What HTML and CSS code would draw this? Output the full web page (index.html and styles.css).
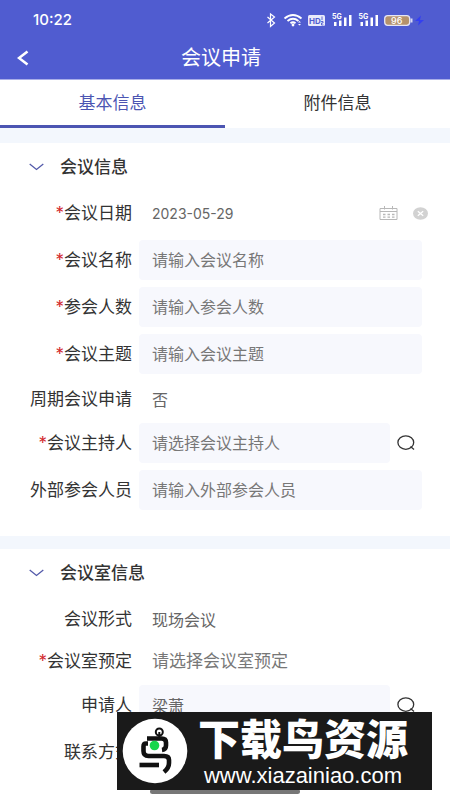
FILE: index.html
```html
<!DOCTYPE html>
<html lang="zh-CN">
<head>
<meta charset="utf-8">
<meta name="viewport" content="width=device-width, initial-scale=1">
<title>会议申请</title>
<link rel="stylesheet" href="styles.css">
</head>
<body>
<header class="top">
  <div class="status">
    <span class="clock">10:22</span>
    <svg class="status-icons" width="160" height="16" viewBox="0 0 160 16" aria-hidden="true">
      <path d="M1.500 5l7 6-4 3.500V2l4 3-7 6" fill="none" stroke="#fff" stroke-width="1.200"/>
      <g fill="none" stroke="#fff" stroke-width="1.800">
        <path d="M18.500 6.500q8.500-7 17 0M21.500 9q5.500-4.500 11 0M24.500 11.300q2.500-2 5 0"/>
      </g>
      <circle cx="27" cy="13" r="1.400" fill="#fff"/>
      <path d="M32 10.500l1.500-1.500 1.500 1.500zM32 12l1.500 1.500 1.500-1.500z" fill="#fff"/>
      <rect x="42" y="3" width="17" height="11" rx="1.500" fill="#e9eafa"/>
      <text x="43" y="11.500" class="hd">HD</text>
      <path d="M56 4.500v3.500M55 9.500h2v1.500h-1.500V13h2" fill="none" stroke="#505cd0" stroke-width=".9"/>
      <g fill="#fff">
        <text x="66" y="6.500" class="net">5G</text>
        <path d="M68 10h2.500v4H68zM73 8.500h2.500V14H73zM78 5.500h2.500V14H78zM83 3h2.500v11H83z"/>
        <text x="92.500" y="6.500" class="net">5G</text>
        <path d="M94.500 10H97v4h-2.500zM99.500 8.500h2.500V14h-2.500zM104.500 5.500h2.500V14h-2.500zM109.500 3h2.500v11h-2.500z"/>
      </g>
      <rect x="118.700" y="3.700" width="25" height="9.600" rx="3" fill="#b5926c" stroke="#e6e5f5" stroke-width="1.300"/>
      <path d="M145.500 6.500v4" stroke="#d9dbf5" stroke-width="2"/>
      <text x="125" y="12" class="batt">96</text>
      <path d="M155 3.500l-6 5.500h4l-1 4.500 6-5.500h-4z" fill="#343ff0"/>
    </svg>
  </div>
  <div class="nav">
    <button class="back" type="button" aria-label="返回">
      <svg width="12" height="16" viewBox="0 0 12 16"><path d="M10.500 1.500L2 8l8.500 6.500" fill="none" stroke="#fff" stroke-width="2.600"/></svg>
    </button>
    <h1 class="title">会议申请</h1>
  </div>
</header>

<nav class="tabs">
  <button class="tab tab-active" type="button">基本信息</button>
  <button class="tab" type="button">附件信息</button>
</nav>

<main class="main">
  <section class="card">
    <h2 class="card-head"><button class="toggle" type="button">
      <svg width="15" height="8" viewBox="0 0 15 8"><path d="M.7 1L7.500 6.500 14.300 1" fill="none" stroke="#535aaa" stroke-width="1.300"/></svg>
      会议信息</button></h2>
    <div class="fields">
      <div class="row row-date">
        <label class="label required" for="date">会议日期</label>
        <input class="field plain date" id="date" value="2023-05-29">
        <button class="icon-btn" type="button" aria-label="选择日期">
          <svg width="19" height="14" viewBox="0 0 19 14" fill="none" stroke="#b8b8b8"><path d="M1 2.500h17v11H1zM1 5.500h17M5.500 0v3.500M13.500 0v3.500"/><path d="M4 8.500h11.500M4 11.200h11.500" stroke-dasharray="2.500 2" stroke-width="1.300"/></svg>
        </button>
        <button class="icon-btn" type="button" aria-label="清除">
          <svg width="15" height="13" viewBox="0 0 15 13"><ellipse cx="7.500" cy="6.500" rx="7.500" ry="6.200" fill="#d2d2d2"/><path d="M4.800 4.200l5.400 4.600M10.200 4.200L4.800 8.800" stroke="#fff" stroke-width="1.300"/></svg>
        </button>
      </div>
      <div class="row">
        <label class="label required" for="name">会议名称</label>
        <input class="field" id="name" placeholder="请输入会议名称">
      </div>
      <div class="row">
        <label class="label required" for="count">参会人数</label>
        <input class="field" id="count" placeholder="请输入参会人数">
      </div>
      <div class="row">
        <label class="label required" for="topic">会议主题</label>
        <input class="field" id="topic" placeholder="请输入会议主题">
      </div>
      <div class="row row-short">
        <label class="label" for="cycle">周期会议申请</label>
        <input class="field plain" id="cycle" value="否" readonly>
      </div>
      <div class="row">
        <label class="label required" for="host">会议主持人</label>
        <input class="field" id="host" placeholder="请选择会议主持人">
        <button class="icon-btn" type="button" aria-label="搜索">
          <svg width="18" height="16" viewBox="0 0 18 16" fill="none" stroke="#333" stroke-width="1.300"><ellipse cx="8.800" cy="7.600" rx="7.900" ry="6.700"/><path d="M13.500 11.500l3.500 3"/></svg>
        </button>
      </div>
      <div class="row">
        <label class="label" for="guests">外部参会人员</label>
        <input class="field" id="guests" placeholder="请输入外部参会人员">
      </div>
    </div>
  </section>

  <section class="card">
    <h2 class="card-head"><button class="toggle" type="button">
      <svg width="15" height="8" viewBox="0 0 15 8"><path d="M.7 1L7.500 6.500 14.300 1" fill="none" stroke="#535aaa" stroke-width="1.300"/></svg>
      会议室信息</button></h2>
    <div class="fields fields-room">
      <div class="row row-short">
        <label class="label" for="form">会议形式</label>
        <input class="field plain" id="form" value="现场会议" readonly>
      </div>
      <div class="row row-short">
        <label class="label required" for="room">会议室预定</label>
        <input class="field plain large" id="room" placeholder="请选择会议室预定">
      </div>
      <div class="row">
        <label class="label" for="applicant">申请人</label>
        <input class="field" id="applicant" value="梁萧">
        <button class="icon-btn" type="button" aria-label="搜索">
          <svg width="18" height="16" viewBox="0 0 18 16" fill="none" stroke="#333" stroke-width="1.300"><ellipse cx="8.800" cy="7.600" rx="7.900" ry="6.700"/><path d="M13.500 11.500l3.500 3"/></svg>
        </button>
      </div>
      <div class="row">
        <label class="label" for="contact">联系方式</label>
        <input class="field plain" id="contact">
      </div>
    </div>
  </section>
</main>

<div class="home-bar"></div>
<aside class="mark">
  <svg class="mark-logo" width="66" height="66" viewBox="0 0 66 66" aria-hidden="true">
    <circle cx="33" cy="33" r="32.300" fill="#fff"/>
    <g fill="none" stroke="#111" stroke-width="4.600" stroke-linejoin="round">
      <circle cx="37.300" cy="14" r="3.500" stroke-width="2"/>
      <path d="M37.300 14v5" stroke-width="2"/>
      <path d="M25 20.500h14.500q4.500 0 4.500 4v3q0 4-4 4.500"/>
      <path d="M26 25.500h-2q-2.500 0-2.500 3v4.500q0 5 5 5h15.500q5 0 5 4v3q0 5-5 9"/>
      <path d="M17.500 47h19.500"/>
    </g>
    <circle cx="32.500" cy="27.500" r="4.800" fill="#18d64b"/>
  </svg>
  <div class="mark-text">
    <strong class="mark-name">下载鸟资源</strong>
    <span class="mark-url">www.xiazainiao.com</span>
  </div>
</aside>
</body>
</html>
```
FILE: styles.css
```css
* {
  box-sizing: border-box;
}

body {
  margin: 0;
  min-height: 100vh;
  background: #fff;
  color: #333;
  font-family: Inter, "Noto Sans CJK SC", sans-serif;
  font-size: 17px;
  line-height: 24px;
}

button,
input {
  margin: 0;
  padding: 0;
  border: 0;
  background: none;
  color: inherit;
  font: inherit;
}

svg {
  display: block;
}

.top {
  height: 80px;
  border-bottom: 1px solid #a9aee8;
  background: #505cd0;
  color: #fff;
}

.status {
  display: flex;
  align-items: center;
  justify-content: space-between;
  height: 40px;
  padding: 0 24px 0 33px;
}

.clock {
  font-size: 15px;
  font-weight: 500;
}

.hd {
  fill: #505cd0;
  font-size: 8px;
  font-weight: 700;
}

.net {
  font-size: 7px;
  font-weight: 700;
}

.batt {
  fill: #fff;
  font-size: 9px;
  font-weight: 500;
}

.nav {
  display: grid;
  grid-template-columns: 48px 1fr 56px;
  align-items: center;
  height: 36px;
}

.back {
  padding-left: 17px;
}

.title {
  margin: 0;
  font-size: 20px;
  font-weight: 400;
  line-height: 28px;
  text-align: center;
}

.tabs {
  display: flex;
  height: 48px;
}

.tab {
  flex: 1;
  border-bottom: 3px solid transparent;
}

.tab-active {
  border-color: #4c55b2;
  color: #4c55b2;
}

.main {
  display: grid;
  grid-template-columns: minmax(0, 1fr);
  gap: 13px;
  padding-top: 15px;
  background: #f3f7fd;
}

.card {
  padding-bottom: 26px;
  background: #fff;
}

.card-head {
  margin: 0;
  font-size: 17px;
  font-weight: 500;
}

.toggle {
  display: flex;
  align-items: center;
  gap: 16px;
  width: 100%;
  height: 48px;
  padding-left: 29px;
}

.fields {
  display: grid;
  grid-template-columns: minmax(0, 1fr);
  gap: 7px;
  padding: 2px 28px 0 0;
}

.fields-room {
  padding-top: 4px;
}

.row {
  display: flex;
  align-items: center;
  height: 40px;
}

.row-short {
  height: 35px;
}

.row-date {
  margin-right: -14px;
}

.label {
  flex: none;
  width: 132px;
  margin-right: 7px;
  text-align: right;
  white-space: nowrap;
}

.required::before {
  content: "*";
  color: #d2282d;
}

.field {
  flex: 1;
  min-width: 0;
  height: 100%;
  padding: 0 13px;
  border-radius: 4px;
  background: #f7f8fd;
  color: #666;
  font-size: 16px;
}

.plain {
  background: none;
}

.date {
  font-size: 14px;
}

.large {
  font-size: 17px;
}

.field::placeholder {
  color: #777;
  opacity: 1;
}

.icon-btn {
  display: flex;
  flex: none;
  align-items: center;
  justify-content: center;
  width: 32px;
  height: 32px;
}

.home-bar {
  position: fixed;
  bottom: 6px;
  left: 33.333%;
  width: 33.333%;
  height: 5px;
  border-radius: 3px;
  background: #777;
}

.mark {
  position: fixed;
  bottom: 10px;
  left: 26%;
  display: flex;
  align-items: center;
  width: 70%;
  height: 78px;
  padding: 0 14px 0 5px;
  background: #1a1a1a;
  color: #fff;
}

.mark-logo {
  flex: none;
}

.mark-text {
  display: grid;
  flex: 1;
  row-gap: 2px;
  justify-items: center;
  padding-top: 4px;
}

.mark-name {
  font-size: 42px;
  font-weight: 900;
  line-height: 44px;
  white-space: nowrap;
}

.mark-url {
  font-family: "Liberation Sans", sans-serif;
  font-size: 22px;
  line-height: 24px;
}
```
